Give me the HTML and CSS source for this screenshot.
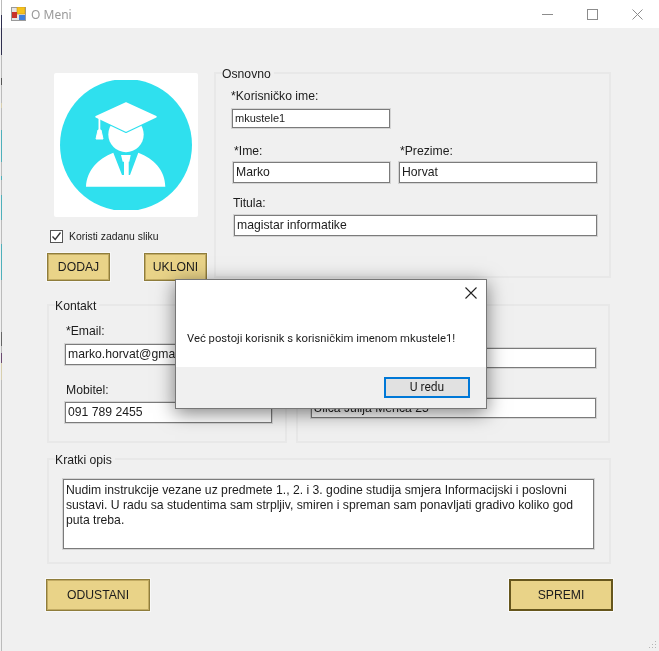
FILE: index.html
```html
<!DOCTYPE html>
<html lang="hr">
<head>
<meta charset="utf-8">
<title>O Meni</title>
<link rel="stylesheet" href="styles.css">
</head>
<body>
<div class="window">
  <header class="titlebar">
    <svg class="app-icon" width="15" height="14" viewBox="0 0 15 14">
      <rect x="0.5" y="0.5" width="14" height="13" fill="#e4e4e4" stroke="#9a9a9a"/>
      <rect x="6" y="0" width="8" height="7" fill="#f6c21c" stroke="#c9951a" stroke-width="0.6"/>
      <rect x="1" y="5" width="5" height="6" fill="#c8322a"/>
      <rect x="8" y="8" width="6" height="5" fill="#3f7fdc"/>
    </svg>
    <span class="title-text">O Meni</span>
    <div class="controls">
      <svg width="11" height="11" viewBox="0 0 11 11"><path d="M0 5.5H11" stroke="#8c8c8c" fill="none"/></svg>
      <svg width="11" height="11" viewBox="0 0 11 11"><rect x="0.5" y="0.5" width="10" height="10" stroke="#8c8c8c" fill="none"/></svg>
      <svg width="11" height="11" viewBox="0 0 11 11"><path d="M0.5 0.5L10.5 10.5M10.5 0.5L0.5 10.5" stroke="#8c8c8c" fill="none"/></svg>
    </div>
  </header>

  <main class="form">
    <div class="top-row">
      <div class="picture-col">
        <div class="picture">
          <svg width="144" height="144" viewBox="0 0 144 144">
            <defs><clipPath id="clip"><rect x="0" y="7" width="144" height="130"/></clipPath></defs>
            <circle cx="72" cy="72" r="66" fill="#2fe0ee" clip-path="url(#clip)"/>
            <circle cx="72" cy="61.5" r="17.7" fill="#fff"/>
            <path d="M72 30L102 43.7L72 58L42 43.7Z" fill="#fff" stroke="#2fe0ee" stroke-width="4" stroke-linejoin="round"/>
            <path d="M72 30L102 43.7L72 58L42 43.7Z" fill="#fff" stroke="#fff" stroke-width="1.5" stroke-linejoin="round"/>
            <path d="M45.4 44V58" stroke="#fff" stroke-width="1.8" fill="none"/>
            <path d="M44 57H47L49 66H42Z" fill="#fff" stroke="#fff" stroke-linejoin="round"/>
            <path d="M32 113.7C33 97 44 86 59.3 79.7L68 102H76L84.3 79.7C100 86 111 97 111.3 113.7Z" fill="#fff"/>
            <path d="M67 82H76.7L75.3 88.7H74.7V103H70V88.7H68.7Z" fill="#fff"/>
          </svg>
        </div>
        <div class="check-row">
          <span class="checkbox">
            <svg width="11" height="11" viewBox="0 0 11 11"><path d="M1.5 5.5L4.2 8.5L9.5 1.5" stroke="#333" stroke-width="1.3" fill="none"/></svg>
          </span>
          <span class="check-label">Koristi zadanu sliku</span>
        </div>
        <div class="pic-buttons">
          <div class="btn btn-small">DODAJ</div>
          <div class="btn btn-small">UKLONI</div>
        </div>
      </div>

      <section class="group group-basic">
        <div class="legend">Osnovno</div>
        <div class="field f-user">
          <div class="label">*Korisničko ime:</div>
          <div class="input input-user">mkustele1</div>
        </div>
        <div class="name-row">
          <div class="field f-first">
            <div class="label">*Ime:</div>
            <div class="input input-first">Marko</div>
          </div>
          <div class="field f-last">
            <div class="label">*Prezime:</div>
            <div class="input input-last">Horvat</div>
          </div>
        </div>
        <div class="field f-title">
          <div class="label">Titula:</div>
          <div class="input input-title">magistar informatike</div>
        </div>
      </section>
    </div>

    <div class="middle-row">
      <section class="group group-contact">
        <div class="legend">Kontakt</div>
        <div class="field f-email">
          <div class="label">*Email:</div>
          <div class="input input-email">marko.horvat@gmail.com</div>
        </div>
        <div class="field f-phone">
          <div class="label">Mobitel:</div>
          <div class="input input-phone">091 789 2455</div>
        </div>
      </section>
      <section class="group group-address">
        <div class="input input-address first-address"></div>
        <div class="input input-address second-address">Ulica Julija Merića 25</div>
      </section>
    </div>

    <section class="group group-bio">
      <div class="legend">Kratki opis</div>
      <div class="textarea">Nudim instrukcije vezane uz predmete 1., 2. i 3. godine studija smjera Informacijski i poslovni<br>sustavi. U radu sa studentima sam strpljiv, smiren i spreman sam ponavljati gradivo koliko god<br>puta treba.</div>
    </section>

    <div class="actions">
      <div class="btn btn-large">ODUSTANI</div>
      <div class="btn btn-large btn-default">SPREMI</div>
    </div>
  </main>

  <div class="dialog">
    <div class="dialog-body">
      <svg class="dialog-close" width="12" height="12" viewBox="0 0 12 12"><path d="M0.5 0.5L11.5 11.5M11.5 0.5L0.5 11.5" stroke="#222" stroke-width="1.1" fill="none"/></svg>
      <div class="dialog-text">Već postoji korisnik s korisničkim imenom mkustele1!</div>
    </div>
    <div class="dialog-footer">
      <div class="dialog-btn">U redu</div>
    </div>
  </div>

  <div class="edge"></div>

  <svg class="grip" width="8" height="8" viewBox="0 0 8 8">
    <g fill="#b5b5b5">
      <rect x="6" y="0" width="1" height="1"/><rect x="3" y="3" width="1" height="1"/><rect x="6" y="3" width="1" height="1"/>
      <rect x="0" y="6" width="1" height="1"/><rect x="3" y="6" width="1" height="1"/><rect x="6" y="6" width="1" height="1"/>
    </g>
  </svg>
</div>
</body>
</html>
```

FILE: styles.css
```css
* { box-sizing: border-box; }

html, body {
  margin: 0;
  padding: 0;
  background: #fff;
}

body {
  font-family: "Liberation Sans", Arial, sans-serif;
  font-size: 12.2px;
  line-height: 15px;
  color: #1c1c1c;
}

.window {
  position: relative;
  width: 659px;
  height: 651px;
  overflow: hidden;
  display: flex;
  flex-direction: column;
  background: #f0f0f0;
  filter: blur(.3px);
}

.edge {
  position: absolute;
  left: 1px;
  top: 0;
  width: 1px;
  height: 100%;
  background: linear-gradient(to bottom,
    #bbb 0 15px, #2f3050 15px 55px, #bbb 55px 78px, #555 78px 85px,
    #bbb 85px 103px, #d8cfae 103px 108px, #bbb 108px 130px,
    #4fb0bb 130px 162px, #bbb 162px 176px, #4fb0bb 176px 180px,
    #bbb 180px 195px, #4fb0bb 195px 220px, #bbb 220px 244px,
    #4fb0bb 244px 280px, #bbb 280px 332px, #666 332px 346px,
    #bbb 346px 353px, #6a4a70 353px 363px, #d8cfae 363px 380px,
    #bbb 380px 651px);
}

.titlebar {
  height: 28px;
  flex: none;
  display: flex;
  align-items: center;
  padding-left: 11px;
  background: #fff;
}

.title-text {
  margin-left: 5px;
  font-family: "Noto Sans", sans-serif;
  font-size: 12px;
  color: #9a9a9a;
}

.controls {
  margin-left: auto;
  margin-right: 16px;
  display: flex;
  gap: 34px;
}

.form {
  flex: 1;
  padding: 44px 48px 0 47px;
}

.top-row { display: flex; }

.picture-col {
  width: 167px;
  flex: none;
  padding-top: 1px;
}

.picture {
  width: 144px;
  height: 144px;
  margin-left: 7px;
  background: #fff;
  border-radius: 2px;
}

.picture svg { display: block; }

.check-row {
  display: flex;
  align-items: center;
  gap: 6px;
  margin: 12px 0 0 3px;
}

.checkbox {
  width: 13px;
  height: 13px;
  display: flex;
  align-items: center;
  justify-content: center;
  background: #fff;
  border: 1px solid #555;
}

.check-label { font-size: 10.4px; }

.pic-buttons {
  display: flex;
  gap: 34px;
  margin-top: 9px;
}

.btn {
  display: flex;
  align-items: center;
  justify-content: center;
  background: #e9d388;
  border: 1px solid #8f7d3c;
  box-shadow: inset 0 0 0 1px #c2ab63, 0 0 0 1px #f8f8f8;
}

.btn-small {
  width: 63px;
  height: 28px;
}

.btn-large {
  width: 104px;
  height: 32px;
}

.btn-default {
  border: 2px solid #66561c;
  box-shadow: 0 0 0 1px #fafafa;
}

.group {
  border: 2px solid #e8e8e8;
}

.legend {
  width: fit-content;
  height: 14px;
  margin: -7px 0 0 6px;
  padding-right: 3px;
  background: #f0f0f0;
  line-height: 14px;
}

.group-basic {
  width: 397px;
  height: 206px;
}

.label { height: 15px; }

.input {
  height: 21px;
  background: #fff;
  border: 1px solid #7b7b7b;
  box-shadow: 0 0 0 1px rgba(150, 150, 150, .3);
  padding-left: 2px;
  line-height: 19px;
  white-space: nowrap;
  overflow: hidden;
}

.f-user { margin: 8px 0 0 15px; }

.input-user {
  width: 158px;
  height: 19px;
  margin: 5px 0 0 1px;
  font-size: 11px;
  line-height: 17px;
  padding-left: 2px;
}

.name-row {
  display: flex;
  margin-top: 16px;
}

.f-first { margin-left: 17px; width: 157px; }

.f-last { margin-left: 9px; width: 198px; }

.f-first .label, .f-last .label { margin-left: 1px; }

.input-first, .input-last { margin-top: 3px; }

.f-title { margin: 13px 0 0 17px; }

.input-title {
  width: 363px;
  margin: 4px 0 0 1px;
}

.middle-row {
  display: flex;
  gap: 9px;
  margin: 23px 1px 0 0;
}

.group-contact {
  width: 240px;
  height: 139px;
}

.f-email { margin: 11px 0 0 16px; }

.f-email .label { margin-left: 1px; }

.f-phone { margin: 18px 0 0 16px; }

.f-phone .label { margin-left: 1px; }

.input-email {
  width: 207px;
  margin-top: 5px;
}

.input-phone {
  width: 207px;
  margin-top: 4px;
}

.group-address {
  width: 315px;
  height: 139px;
  padding: 42px 12px 0 13px;
}

.input-address { height: 20px; }

.second-address { margin-top: 30px; line-height: 18px; }

.group-bio {
  width: 564px;
  height: 106px;
  margin-top: 15px;
}

.group-bio .textarea { margin: 12px 0 0 14px; }

.textarea {
  width: 531px;
  height: 70px;
  padding: 3px 2px;
  background: #fff;
  border: 1px solid #7b7b7b;
  box-shadow: 0 0 0 1px rgba(150, 150, 150, .3);
  white-space: nowrap;
}

.actions {
  display: flex;
  justify-content: space-between;
  width: 567px;
  margin: 15px 0 0 -1px;
}

.dialog {
  position: absolute;
  left: 175px;
  top: 279px;
  width: 312px;
  height: 130px;
  display: flex;
  flex-direction: column;
  background: #f0f0f0;
  border: 1px solid #777;
  box-shadow: 0 4px 18px rgba(0, 0, 0, .5);
}

.dialog-body {
  flex: none;
  height: 87px;
  background: #fff;
  display: flex;
  flex-direction: column;
  padding: 7px 9px 0 11px;
}

.dialog-close { align-self: flex-end; }

.dialog-text {
  margin-top: 32px;
  font-family: "Roboto", sans-serif;
  font-size: 11.25px;
  color: #222;
  white-space: nowrap;
}

.dialog-footer {
  flex: 1;
  display: flex;
  justify-content: flex-end;
  align-items: flex-start;
  padding: 10px 16px 0 0;
}

.dialog-btn {
  width: 86px;
  height: 21px;
  display: flex;
  align-items: center;
  justify-content: center;
  background: #e1e1e1;
  border: 2px solid #0078d7;
  font-family: "Roboto", sans-serif;
  font-size: 12px;
}

.grip {
  position: absolute;
  right: 2px;
  bottom: 2px;
}
```
